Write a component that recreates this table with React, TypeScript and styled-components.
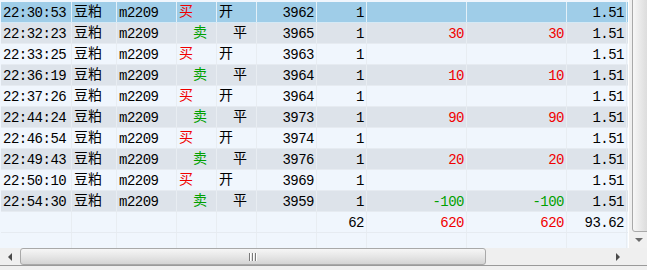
import React from "react";
import styled, { createGlobalStyle } from "styled-components";

const Global = createGlobalStyle`
  html, body { margin: 0; padding: 0; background: #f0f0f0; }
  body { font-family: "Liberation Mono", "Noto Sans CJK SC", monospace; }
`;

const COLS = [71, 45, 60, 40, 40, 60, 50, 100, 100, 60];

type Tone = "sel" | "odd" | "even";

const Window = styled.div`
  width: 647px;
  height: 270px;
  display: flex;
  flex-direction: column;
  background: #f0f0f0;
  overflow: hidden;
`;

const Body = styled.div`
  display: flex;
  height: 248px;
`;

const TableArea = styled.div`
  width: 627px;
  padding-left: 1px;
  padding-top: 2px;
  background: #f0f6fd;
  overflow: hidden;
`;

const Row = styled.div<{ $tone: Tone }>`
  display: grid;
  grid-template-columns: ${COLS.map((c) => c + "px").join(" ")};
  height: 21px;
  box-sizing: border-box;
  border-bottom: 1px solid ${(p) => (p.$tone === "sel" ? "#d5e9f5" : "#e6ebf1")};
  background: ${(p) =>
    p.$tone === "sel" ? "#9fcde8" : p.$tone === "even" ? "#dde3ea" : "#f0f6fd"};
`;

const Cell = styled.div<{ $align?: "left" | "right"; $indent?: boolean; $color?: string; $sel?: boolean }>`
  box-sizing: border-box;
  display: flex;
  align-items: center;
  justify-content: ${(p) => (p.$align === "right" ? "flex-end" : "flex-start")};
  border-right: 1px solid ${(p) => (p.$sel ? "#e3f0f8" : "#e8edf2")};
  padding: 0 ${(p) => (p.$align === "right" ? "2px" : "0")} 0
    ${(p) => (p.$indent ? "16px" : "2px")};
  font-size: 14px;
  height: 20px;
  color: ${(p) => p.$color || "#000"};
  white-space: nowrap;
`;

const Mono = styled.span`
  font-size: 14px;
  line-height: 16px;
  letter-spacing: -0.5px;
  margin-top: 2px;
`;

const Cjk = styled.span`
  font-family: "Noto Sans CJK SC", sans-serif;
  font-size: 14px;
  line-height: 16px;
  margin-bottom: 4px;
`;

const VScroll = styled.div`
  width: 19px;
  height: 248px;
  position: relative;
  background: #f0f0f0;
  border-left: 1px solid #ffffff;
  box-sizing: border-box;
  overflow: hidden;
`;

const VThumb = styled.div`
  position: absolute;
  left: 3px;
  top: -4px;
  width: 20px;
  height: 236px;
  box-sizing: border-box;
  border: 1px solid #a9a9a9;
  border-radius: 0 0 3px 3px;
  background: linear-gradient(to right, #f7f7f7, #e2e2e2 60%, #d6d6d6);
`;

const Arrow = styled.div<{ $dir: "down" | "left" | "right" }>`
  width: 0;
  height: 0;
  ${(p) =>
    p.$dir === "down"
      ? `border-left: 4px solid transparent; border-right: 4px solid transparent; border-top: 4px solid #6a6a6a;`
      : p.$dir === "left"
      ? `border-top: 4px solid transparent; border-bottom: 4px solid transparent; border-right: 4px solid #4a4a4a;`
      : `border-top: 4px solid transparent; border-bottom: 4px solid transparent; border-left: 4px solid #4a4a4a;`}
`;

const VArrowBox = styled.div`
  position: absolute;
  left: 6px;
  top: 238px;
`;

const HScroll = styled.div`
  height: 17px;
  display: flex;
  align-items: stretch;
  background: #efefef;
  border-bottom: 1px solid #9a9a9a;
`;

const HArrowCell = styled.div<{ $w: number }>`
  width: ${(p) => p.$w}px;
  display: flex;
  align-items: center;
  justify-content: center;
`;

const HThumb = styled.div`
  width: 466px;
  box-sizing: border-box;
  border: 1px solid #a9a9a9;
  border-radius: 3px;
  background: linear-gradient(to bottom, #f6f6f6, #e6e6e6 50%, #d4d4d4);
  display: flex;
  align-items: center;
  justify-content: center;
`;

const Grip = styled.div`
  display: flex;
  gap: 1px;
`;

const GripLine = styled.div`
  width: 2px;
  height: 8px;
  background: linear-gradient(to right, #7a7a7a 50%, #ffffff 50%);
`;

const HTrack = styled.div`
  flex: 1;
`;

const Corner = styled.div`
  width: 19px;
  background: #efefef;
`;

const Footer = styled.div`
  flex: 1;
  background: #f0f0f0;
`;

type Side = "买" | "卖" | "";

interface Trade {
  time: string;
  side: Side;
  price: string;
  qty: string;
  p1: string;
  p2: string;
  fee: string;
}

const trades: Trade[] = [
  { time: "22:30:53", side: "买", price: "3962", qty: "1", p1: "", p2: "", fee: "1.51" },
  { time: "22:32:23", side: "卖", price: "3965", qty: "1", p1: "30", p2: "30", fee: "1.51" },
  { time: "22:33:25", side: "买", price: "3963", qty: "1", p1: "", p2: "", fee: "1.51" },
  { time: "22:36:19", side: "卖", price: "3964", qty: "1", p1: "10", p2: "10", fee: "1.51" },
  { time: "22:37:26", side: "买", price: "3964", qty: "1", p1: "", p2: "", fee: "1.51" },
  { time: "22:44:24", side: "卖", price: "3973", qty: "1", p1: "90", p2: "90", fee: "1.51" },
  { time: "22:46:54", side: "买", price: "3974", qty: "1", p1: "", p2: "", fee: "1.51" },
  { time: "22:49:43", side: "卖", price: "3976", qty: "1", p1: "20", p2: "20", fee: "1.51" },
  { time: "22:50:10", side: "买", price: "3969", qty: "1", p1: "", p2: "", fee: "1.51" },
  { time: "22:54:30", side: "卖", price: "3959", qty: "1", p1: "-100", p2: "-100", fee: "1.51" },
];

const RED = "#f00000";
const GREEN = "#00a000";

const numColor = (v: string) => (v.startsWith("-") ? GREEN : RED);

export default function App() {
  return (
    <>
      <Global />
      <Window>
        <Body>
          <TableArea>
            {trades.map((t, i) => {
              const tone: Tone = i === 0 ? "sel" : i % 2 === 1 ? "even" : "odd";
              const sel = tone === "sel";
              const buy = t.side === "买";
              return (
                <Row key={i} $tone={tone}>
                  <Cell $sel={sel}><Mono>{t.time}</Mono></Cell>
                  <Cell $sel={sel}><Cjk>豆粕</Cjk></Cell>
                  <Cell $sel={sel}><Mono>m2209</Mono></Cell>
                  <Cell $sel={sel} $indent={!buy} $color={buy ? RED : GREEN}>
                    <Cjk>{t.side}</Cjk>
                  </Cell>
                  <Cell $sel={sel} $indent={!buy}>
                    <Cjk>{buy ? "开" : "平"}</Cjk>
                  </Cell>
                  <Cell $sel={sel} $align="right"><Mono>{t.price}</Mono></Cell>
                  <Cell $sel={sel} $align="right"><Mono>{t.qty}</Mono></Cell>
                  <Cell $sel={sel} $align="right" $color={numColor(t.p1)}><Mono>{t.p1}</Mono></Cell>
                  <Cell $sel={sel} $align="right" $color={numColor(t.p2)}><Mono>{t.p2}</Mono></Cell>
                  <Cell $sel={sel} $align="right"><Mono>{t.fee}</Mono></Cell>
                </Row>
              );
            })}
            <Row $tone="odd">
              <Cell />
              <Cell />
              <Cell />
              <Cell />
              <Cell />
              <Cell />
              <Cell $align="right"><Mono>62</Mono></Cell>
              <Cell $align="right" $color={RED}><Mono>620</Mono></Cell>
              <Cell $align="right" $color={RED}><Mono>620</Mono></Cell>
              <Cell $align="right"><Mono>93.62</Mono></Cell>
            </Row>
            <Row $tone="odd">
              {COLS.map((_, i) => (
                <Cell key={i} />
              ))}
            </Row>
          </TableArea>
          <VScroll>
            <VThumb />
            <VArrowBox>
              <Arrow $dir="down" />
            </VArrowBox>
          </VScroll>
        </Body>
        <HScroll>
          <HArrowCell $w={20}>
            <Arrow $dir="left" />
          </HArrowCell>
          <HThumb>
            <Grip>
              <GripLine />
              <GripLine />
              <GripLine />
            </Grip>
          </HThumb>
          <HTrack />
          <HArrowCell $w={20}>
            <Arrow $dir="right" />
          </HArrowCell>
          <Corner />
        </HScroll>
        <Footer />
      </Window>
    </>
  );
}
